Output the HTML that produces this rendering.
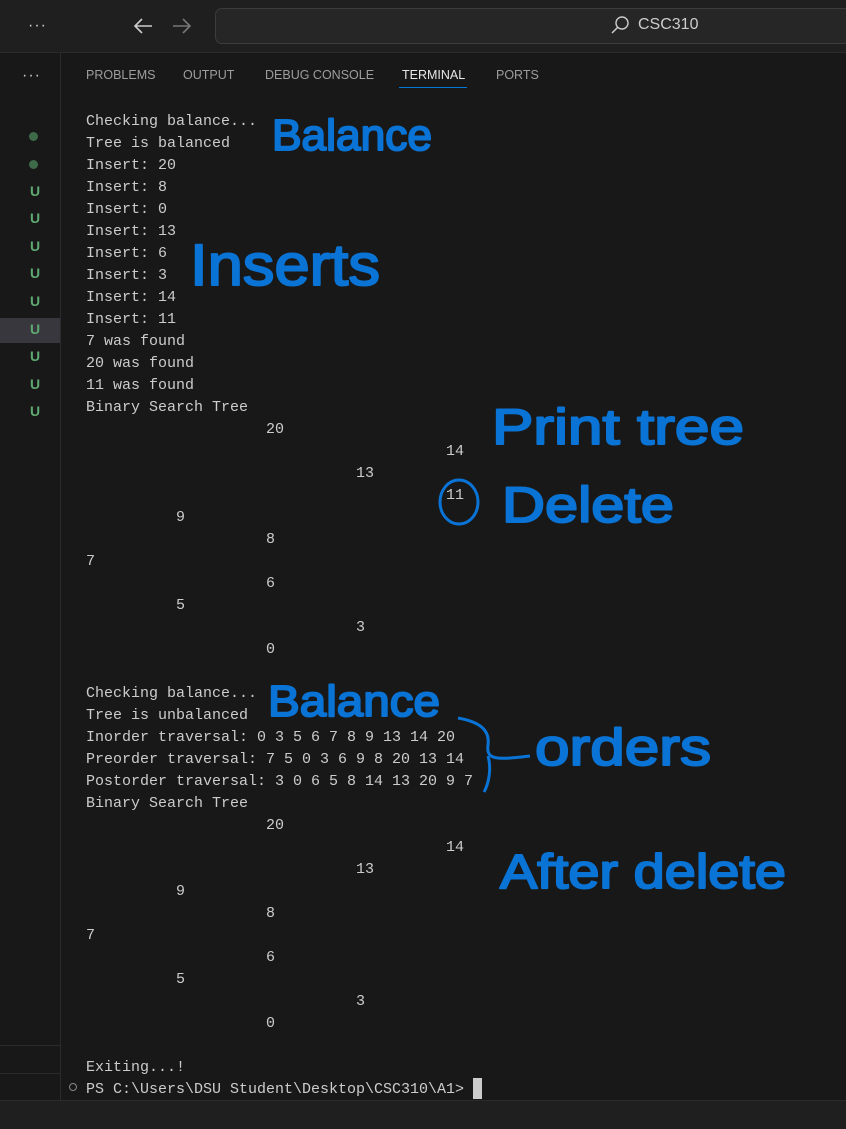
<!DOCTYPE html>
<html><head><meta charset="utf-8"><style>
body{margin:0;width:846px;height:1128px;background:#181818;overflow:hidden;position:relative;font-family:"Liberation Sans",sans-serif}
.top{position:absolute;left:0;top:0;width:846px;height:52px;background:#1f1f1f;border-bottom:1px solid #2b2b2b}
.side{position:absolute;left:0;top:53px;width:60px;height:1047px;background:#181818;border-right:1px solid #2b2b2b}
.bot{position:absolute;left:0;top:1100px;width:846px;height:28px;background:#1f1f1f;border-top:1px solid #2b2b2b}
.search{position:absolute;left:215px;top:8px;width:660px;height:34px;border:1px solid #3c3c3c;border-radius:7px;background:#262626}
.tabs{position:absolute;top:68px;font-size:12.5px;color:#9d9d9d}
.tabs span{position:absolute;white-space:nowrap}
pre{position:absolute;left:86px;top:111px;margin:0;font-family:"Liberation Mono",monospace;font-size:15px;line-height:22px;color:#cccccc}
.u{position:absolute;left:30px;font-size:14px;color:#5fa872;font-weight:bold}
.dot{position:absolute;left:29px;width:9px;height:9px;border-radius:50%;background:#3d6b4a}
</style></head><body>
<div class="top">
<div style="position:absolute;left:28px;top:17px;color:#ccc;font-size:16px;letter-spacing:1px">···</div>
<svg style="position:absolute;left:132px;top:15px" width="70" height="22"><path d="M20 11H3M10 4L3 11L10 18" stroke="#ccc" stroke-width="1.6" fill="none"/><path d="M41 11H58M51 4L58 11L51 18" stroke="#777" stroke-width="1.6" fill="none"/></svg>
<div class="search"></div>
<svg style="position:absolute;left:609px;top:15px" width="22" height="22"><circle cx="13" cy="8" r="6" stroke="#ccc" stroke-width="1.4" fill="none"/><path d="M9 12L3 18" stroke="#ccc" stroke-width="1.5"/></svg>
<div style="position:absolute;left:638px;top:16px;color:#ccc;font-size:16px">CSC310</div>
</div>
<div class="side">
<div style="position:absolute;left:22px;top:14px;color:#ccc;font-size:16px;letter-spacing:1px">···</div>
<div style="position:absolute;left:0;top:265px;width:60px;height:25px;background:#37373d"></div>
<div style="position:absolute;left:0;top:992px;width:60px;height:1px;background:#2b2b2b"></div>
<div style="position:absolute;left:0;top:1020px;width:60px;height:1px;background:#2b2b2b"></div>
</div>
<div class="dot" style="top:132px"></div><div class="dot" style="top:160px"></div>
<div class="u" style="top:183px">U</div><div class="u" style="top:210px">U</div><div class="u" style="top:238px">U</div><div class="u" style="top:265px">U</div><div class="u" style="top:293px">U</div><div class="u" style="top:321px">U</div><div class="u" style="top:348px">U</div><div class="u" style="top:376px">U</div><div class="u" style="top:403px">U</div>
<div class="tabs"><span style="left:86px">PROBLEMS</span><span style="left:183px">OUTPUT</span><span style="left:265px">DEBUG CONSOLE</span><span style="left:402px;color:#e7e7e7">TERMINAL</span><span style="left:496px">PORTS</span></div>
<div style="position:absolute;left:399px;top:87px;width:68px;height:1px;background:#0078d4"></div>
<pre>Checking balance...
Tree is balanced
Insert: 20
Insert: 8
Insert: 0
Insert: 13
Insert: 6
Insert: 3
Insert: 14
Insert: 11
7 was found
20 was found
11 was found
Binary Search Tree
                    20
                                        14
                              13
                                        11
          9
                    8
7
                    6
          5
                              3
                    0

Checking balance...
Tree is unbalanced
Inorder traversal: 0 3 5 6 7 8 9 13 14 20
Preorder traversal: 7 5 0 3 6 9 8 20 13 14
Postorder traversal: 3 0 6 5 8 14 13 20 9 7
Binary Search Tree
                    20
                                        14
                              13
          9
                    8
7
                    6
          5
                              3
                    0

Exiting...!
PS C:\Users\DSU Student\Desktop\CSC310\A1&gt; </pre>
<div style="position:absolute;left:69px;top:1083px;width:6px;height:6px;border:1.5px solid #888;border-radius:50%"></div>
<div style="position:absolute;left:473px;top:1078px;width:9px;height:21px;background:#cccccc"></div>
<svg style="position:absolute;left:0;top:0" width="846" height="1128" font-family="Liberation Sans, sans-serif" fill="#0a74d6" stroke="#0a74d6" stroke-width="2" stroke-linejoin="round">
<text x="272" y="150" font-size="44" textLength="160" lengthAdjust="spacingAndGlyphs">Balance</text>
<text x="190" y="285" font-size="58" textLength="190" lengthAdjust="spacingAndGlyphs">Inserts</text>
<text x="492" y="444" font-size="50" textLength="252" lengthAdjust="spacingAndGlyphs">Print tree</text>
<text x="502" y="522" font-size="50" textLength="172" lengthAdjust="spacingAndGlyphs">Delete</text>
<ellipse cx="459" cy="502" rx="19" ry="22" fill="none" stroke-width="3"/>
<text x="268" y="716" font-size="44" textLength="172" lengthAdjust="spacingAndGlyphs">Balance</text>
<text x="535" y="765" font-size="52" textLength="176" lengthAdjust="spacingAndGlyphs">orders</text>
<path d="M458 718C480 722 490 730 488 745C486 760 496 760 530 756M488 756C492 770 488 785 484 792" fill="none" stroke-width="3"/>
<text x="500" y="888" font-size="48" textLength="286" lengthAdjust="spacingAndGlyphs">After delete</text>
</svg>
<div class="bot"></div>
</body></html>
